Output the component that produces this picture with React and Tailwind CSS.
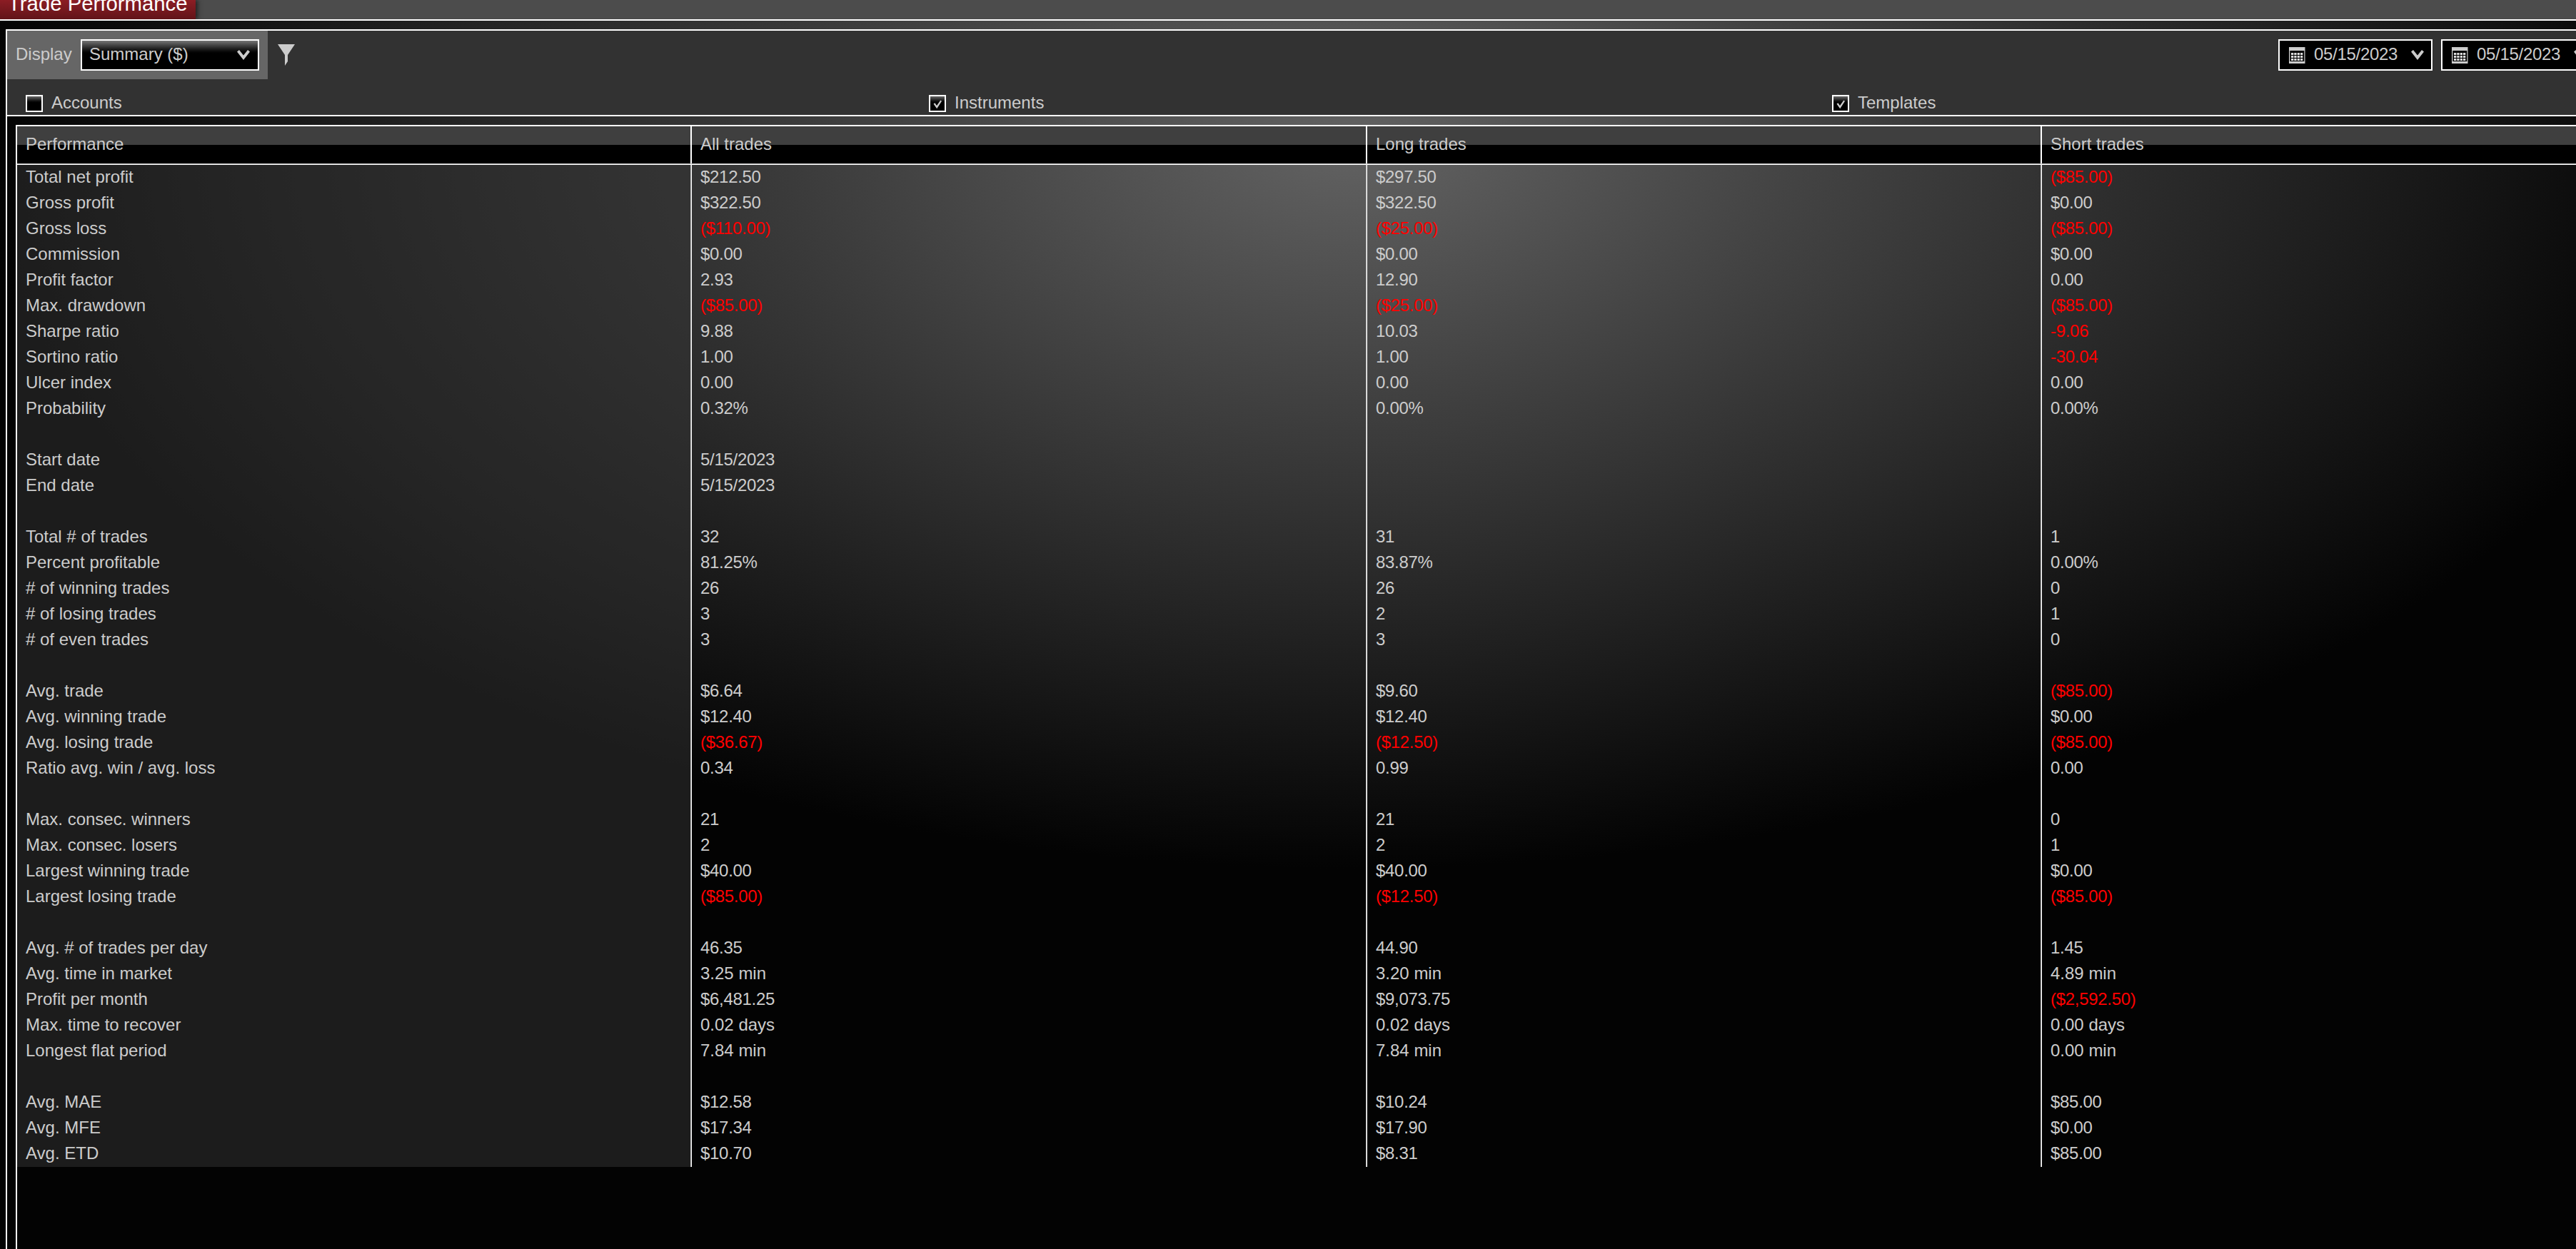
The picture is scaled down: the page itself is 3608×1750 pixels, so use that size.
import React, { useState } from 'react'

const rows = [
    ['Total net profit', '$212.50', '$297.50', '($85.00)'],
    ['Gross profit', '$322.50', '$322.50', '$0.00'],
    ['Gross loss', '($110.00)', '($25.00)', '($85.00)'],
    ['Commission', '$0.00', '$0.00', '$0.00'],
    ['Profit factor', '2.93', '12.90', '0.00'],
    ['Max. drawdown', '($85.00)', '($25.00)', '($85.00)'],
    ['Sharpe ratio', '9.88', '10.03', '-9.06'],
    ['Sortino ratio', '1.00', '1.00', '-30.04'],
    ['Ulcer index', '0.00', '0.00', '0.00'],
    ['Probability', '0.32%', '0.00%', '0.00%'],
    ['', '', '', ''],
    ['Start date', '5/15/2023', '', ''],
    ['End date', '5/15/2023', '', ''],
    ['', '', '', ''],
    ['Total # of trades', '32', '31', '1'],
    ['Percent profitable', '81.25%', '83.87%', '0.00%'],
    ['# of winning trades', '26', '26', '0'],
    ['# of losing trades', '3', '2', '1'],
    ['# of even trades', '3', '3', '0'],
    ['', '', '', ''],
    ['Avg. trade', '$6.64', '$9.60', '($85.00)'],
    ['Avg. winning trade', '$12.40', '$12.40', '$0.00'],
    ['Avg. losing trade', '($36.67)', '($12.50)', '($85.00)'],
    ['Ratio avg. win / avg. loss', '0.34', '0.99', '0.00'],
    ['', '', '', ''],
    ['Max. consec. winners', '21', '21', '0'],
    ['Max. consec. losers', '2', '2', '1'],
    ['Largest winning trade', '$40.00', '$40.00', '$0.00'],
    ['Largest losing trade', '($85.00)', '($12.50)', '($85.00)'],
    ['', '', '', ''],
    ['Avg. # of trades per day', '46.35', '44.90', '1.45'],
    ['Avg. time in market', '3.25 min', '3.20 min', '4.89 min'],
    ['Profit per month', '$6,481.25', '$9,073.75', '($2,592.50)'],
    ['Max. time to recover', '0.02 days', '0.02 days', '0.00 days'],
    ['Longest flat period', '7.84 min', '7.84 min', '0.00 min'],
    ['', '', '', ''],
    ['Avg. MAE', '$12.58', '$10.24', '$85.00'],
    ['Avg. MFE', '$17.34', '$17.90', '$0.00'],
    ['Avg. ETD', '$10.70', '$8.31', '$85.00'],
]

const headers = ['Performance', 'All trades', 'Long trades', 'Short trades']

const isNegative = (v) => v.startsWith('(') || v.startsWith('-')
const isNumeric = (v) => !/[a-z]/i.test(v)

function Chevron() {
    return (
        <svg width="20" height="16" viewBox="0 0 20 16" className="shrink-0">
            <path d="M1 3.6 L4 1 L10 8.4 L16 1 L19 3.6 L10 15 Z" fill="#ccc" />
        </svg>
    )
}

function CalendarIcon() {
    return (
        <svg width="23" height="23" viewBox="0 0 23 23" className="shrink-0">
            <rect width="22.5" height="23" fill="#ccc" />
            <rect x="1.3" y="5" width="20" height="15" fill="#000" />
            {[8, 12, 16].map((y) => [3, 7.3, 11.7, 16].map((x) => (
                <rect key={`${x}-${y}`} x={x} y={y} width="3.3" height="3" fill="#ddd" />
            )))}
        </svg>
    )
}

function DatePicker({ value }) {
    return (
        <button className="flex h-[44px] w-[216px] shrink-0 items-center border-2 border-white bg-black pl-[13px] pr-[9px]">
            <CalendarIcon />
            <span className="ml-[12px] flex-1 pb-[2px] text-left tracking-[-0.3px]">{value}</span>
            <Chevron />
        </button>
    )
}

function Check({ label, checked, onClick }) {
    return (
        <button onClick={onClick} className="flex h-[24px] w-[1265px] shrink-0 items-center">
            <span className="h-[24px] w-[24px] border-2 border-white bg-linear-to-b from-[#6a6a6a] to-black to-50%">
                {checked && (
                    <svg width="20" height="20" viewBox="0 0 20 20">
                        <path d="M4.5 10.5 L6.5 9.2 L9 13 L14.3 5.6 L16 6.8 L9.2 17.2 Z" fill="#ccc" />
                    </svg>
                )}
            </span>
            <span className="ml-[12px] pb-[2px] leading-[24px]">{label}</span>
        </button>
    )
}

export default function App() {
    const [filters, setFilters] = useState({ Accounts: false, Instruments: true, Templates: true })

    const toggle = (name) => setFilters({ ...filters, [name]: !filters[name] })

    return (
        <div className="flex h-[1750px] w-[3608px] flex-col overflow-hidden bg-[#030303] font-['Liberation_Sans',Arial,sans-serif] text-[24px] leading-[28px] text-[#ccc]">
            {/* barra de titulo */}
            <div className="flex h-[29px] shrink-0 overflow-hidden border-b-2 border-white bg-[#4c4c4c]">
                <div className="flex h-[27px] w-[274px] items-end bg-linear-to-b from-[#8c1d24] to-[#621419] pl-[11px] shadow-[3px_0_6px_#222]">
                    <h1 className="whitespace-nowrap pb-[5px] text-[29.33px] leading-[34px] text-white">Trade Performance</h1>
                </div>
            </div>

            <div className="flex min-h-0 flex-1 bg-[radial-gradient(1930px_1017px_at_1895px_171px,#626262,#030303)] pl-[8px] pt-[12px]">
                <div className="flex min-w-0 flex-1 flex-col border-l-2 border-t-2 border-white">
                    <div className="h-[120px] shrink-0 border-b-2 border-white bg-[#323232]">
                        <div className="flex h-[68px] justify-between">
                            <div className="flex">
                                <div className="flex w-[365px] items-center bg-[#666] pl-[12px]">
                                    <span className="w-[91px] pb-[2px]">Display</span>
                                    <button className="flex h-[44px] w-[250px] items-center justify-between border-2 border-white bg-linear-to-b from-[#777] to-black to-50% pl-[10px] pr-[10px]">
                                        <span className="pb-[2px]">Summary ($)</span>
                                        <Chevron />
                                    </button>
                                </div>
                                <svg width="24" height="30" viewBox="0 0 24 30" className="ml-[14px] mt-[19px]">
                                    <path d="M0 0 H24 L14 15 V24 L10 30 V15 Z" fill="#ccc" />
                                </svg>
                            </div>
                            <div className="-mr-[27px] flex items-center gap-[12px]">
                                <DatePicker value="05/15/2023" />
                                <DatePicker value="05/15/2023" />
                            </div>
                        </div>
                        <div className="flex pl-[26px] pt-[22px]">
                            {Object.keys(filters).map((name) => (
                                <Check key={name} label={name} checked={filters[name]} onClick={() => toggle(name)} />
                            ))}
                        </div>
                    </div>

                    <div className="flex min-h-0 flex-1 flex-col pl-[12px] pt-[12px]">
                        <div className="min-h-0 flex-1 border-l-2 border-t-2 border-white">
                            <div className="grid grid-cols-[945px_946px_945px_1fr] border-b border-[#bbb] bg-[linear-gradient(#3f3f3f_50%,#000_50%)]">
                                {headers.map((h, i) => (
                                    <div key={h} className={`h-[52px] pl-[12px] pt-[11px] ${i < 3 ? 'border-r-2 border-white' : ''}`}>{h}</div>
                                ))}
                            </div>
                            <div className="border-t border-white">
                                {rows.map((row, r) => (
                                    <div key={r} className="grid h-[36px] grid-cols-[945px_946px_945px_1fr]">
                                        {row.map((cell, i) => (
                                            <div
                                                key={i}
                                                className={`pl-[12px] pt-[3px] ${i === 0 ? 'bg-[#333333]/52' : ''} ${i < 3 ? 'border-r border-white shadow-[inset_-1px_0_#b5b5b5]' : ''} ${isNumeric(cell) ? 'tracking-[-0.3px]' : ''} ${i > 0 && isNegative(cell) ? 'text-[#f00]' : ''}`}
                                            >
                                                {cell}
                                            </div>
                                        ))}
                                    </div>
                                ))}
                            </div>
                        </div>
                    </div>
                </div>
            </div>
        </div>
    )
}
